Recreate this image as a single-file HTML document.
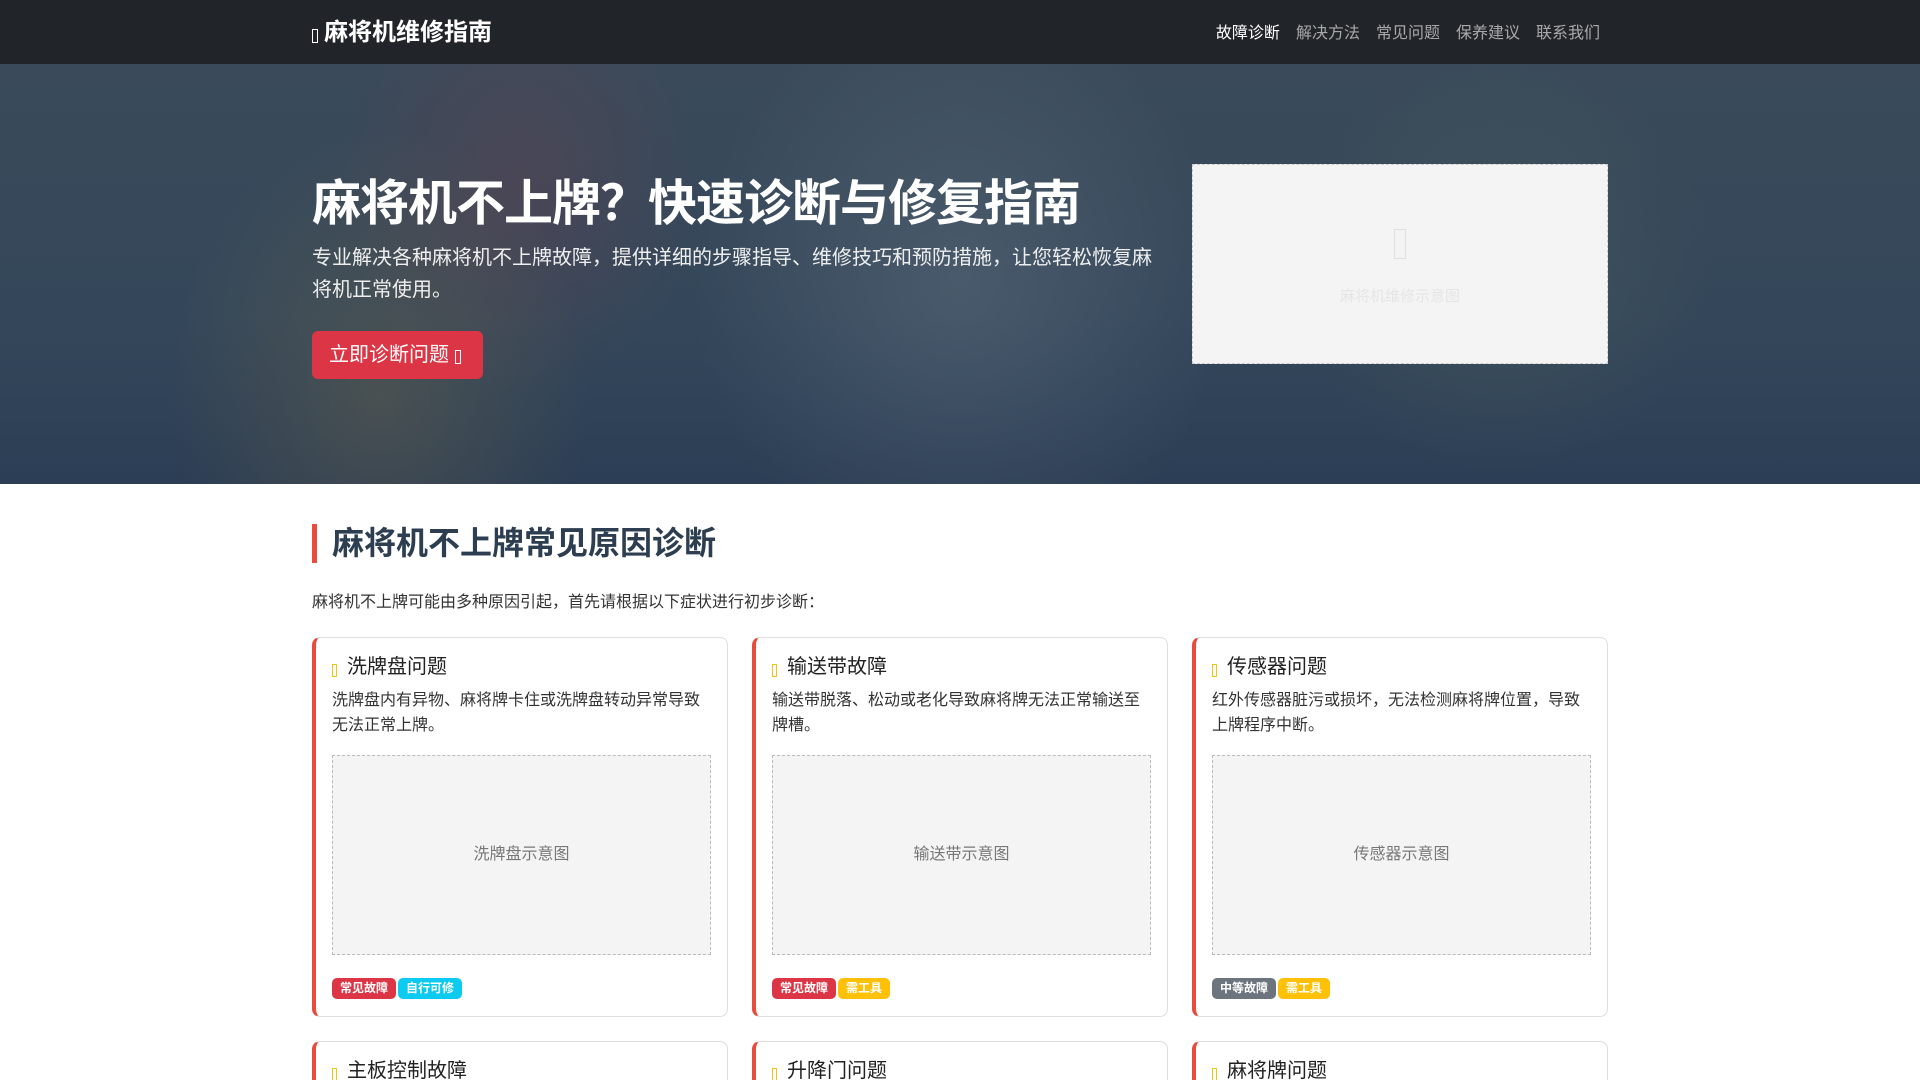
<!DOCTYPE html>
<html><head><meta charset="utf-8"><style>
*{margin:0;padding:0;box-sizing:border-box}
html,body{width:1920px;height:1080px;overflow:hidden}
body{background:#fff;font-family:"Liberation Sans","Noto Sans CJK SC",sans-serif;color:#333}
#wrap{position:relative;width:1920px;height:1080px;overflow:hidden}
.nav{height:64px;background:#212529;position:relative}
.logo{position:absolute;left:312px;top:12px;color:#fff;font-size:24px;font-weight:bold}
.logo i,.ico{display:inline-block;border:1px solid currentColor;width:6px;height:14px;vertical-align:-3px;margin-right:6px}
.menu{position:absolute;right:320px;top:19px;font-size:16px;color:rgba(255,255,255,.6)}
.menu span{margin-left:16px}
.menu span:first-child{color:#fff}
.hero{position:relative;height:420px;overflow:hidden;background:
radial-gradient(ellipse 300px 380px at 380px 330px,rgba(160,130,60,.22),transparent 70%),
radial-gradient(ellipse 260px 300px at 520px 120px,rgba(150,60,70,.2),transparent 70%),
radial-gradient(ellipse 380px 420px at 960px 220px,rgba(110,125,140,.35),transparent 70%),
radial-gradient(ellipse 300px 300px at 1500px 200px,rgba(80,100,95,.4),transparent 70%),
linear-gradient(180deg,#3a4a5a 0%,#34475a 60%,#2c3e55 100%)}
.h1{position:absolute;left:312px;top:100px;font-size:49px;font-weight:bold;color:#fff;letter-spacing:-1px}
.sub{position:absolute;left:312px;top:178px;width:850px;font-size:20px;line-height:32px;color:#eee}
.btn{position:absolute;left:312px;top:267px;width:171px;height:48px;background:#dc3545;border-radius:6px;color:#fff;font-size:20px;line-height:48px;padding-left:17px}
.btn i{display:inline-block;border:1px solid #fff;width:6px;height:14px;vertical-align:-3px;margin-left:6px}
.pic{position:absolute;left:1192px;top:100px;width:416px;height:200px;background:#f4f4f4;border:1px dashed #ccc;text-align:center;color:#e5e5e5;font-size:15px}
.pic i{display:block;margin:64px auto 26px;width:12px;height:30px;border:1px solid #e0e0e0}
.sec{position:absolute;left:312px;top:524px;border-left:5px solid #e74c3c;padding-left:15px;font-size:32px;font-weight:bold;color:#2c3e50;line-height:39px}
.p{position:absolute;left:312px;top:588px;font-size:16px;color:#333}
.card{position:absolute;width:416px;height:380px;border:1px solid #ddd;border-left:4px solid #e74c3c;border-radius:8px;padding:14px 16px 0 16px;background:#fff;overflow:hidden}
.card.b{height:39px;border-bottom:none;border-radius:8px 8px 0 0}
.card h3{font-size:20px;font-weight:normal;color:#222;line-height:30px}
.card h3 .ico{color:#f1c40f;width:5px;height:13px;vertical-align:-4px;margin-right:10px}
.card p{font-size:16px;line-height:25px;color:#333;margin-top:6px;height:58px}
.img{margin-top:9px;height:200px;background:#f4f4f4;border:1px dashed #bbb;text-align:center;line-height:198px;color:#777;font-size:16px}
.tags{margin-top:23px}
.tag{display:inline-block;font-size:12px;font-weight:bold;color:#fff;padding:0 8px;height:21px;line-height:21px;border-radius:5px;margin-right:2px}
.r{background:#dc3545}.c{background:#0dcaf0}.y{background:#ffc107}.g{background:#6c757d}
</style></head><body><div id="wrap">
<div class="nav"><div class="logo"><i></i>麻将机维修指南</div>
<div class="menu"><span>故障诊断</span><span>解决方法</span><span>常见问题</span><span>保养建议</span><span>联系我们</span></div></div>
<div class="hero">
<div class="h1">麻将机不上牌？快速诊断与修复指南</div>
<div class="sub">专业解决各种麻将机不上牌故障，提供详细的步骤指导、维修技巧和预防措施，让您轻松恢复麻将机正常使用。</div>
<div class="btn">立即诊断问题<i></i></div>
<div class="pic"><i></i>麻将机维修示意图</div>
</div>
<div class="sec">麻将机不上牌常见原因诊断</div>
<div class="p">麻将机不上牌可能由多种原因引起，首先请根据以下症状进行初步诊断：</div>
<div class="card" style="left:312px;top:637px"><h3><span class="ico"></span>洗牌盘问题</h3><p>洗牌盘内有异物、麻将牌卡住或洗牌盘转动异常导致无法正常上牌。</p><div class="img">洗牌盘示意图</div><div class="tags"><span class="tag r">常见故障</span><span class="tag c">自行可修</span></div></div>
<div class="card" style="left:752px;top:637px"><h3><span class="ico"></span>输送带故障</h3><p>输送带脱落、松动或老化导致麻将牌无法正常输送至牌槽。</p><div class="img">输送带示意图</div><div class="tags"><span class="tag r">常见故障</span><span class="tag y">需工具</span></div></div>
<div class="card" style="left:1192px;top:637px"><h3><span class="ico"></span>传感器问题</h3><p>红外传感器脏污或损坏，无法检测麻将牌位置，导致上牌程序中断。</p><div class="img">传感器示意图</div><div class="tags"><span class="tag g">中等故障</span><span class="tag y">需工具</span></div></div>
<div class="card b" style="left:312px;top:1041px"><h3><span class="ico"></span>主板控制故障</h3></div>
<div class="card b" style="left:752px;top:1041px"><h3><span class="ico"></span>升降门问题</h3></div>
<div class="card b" style="left:1192px;top:1041px"><h3><span class="ico"></span>麻将牌问题</h3></div>
</div></body></html>
